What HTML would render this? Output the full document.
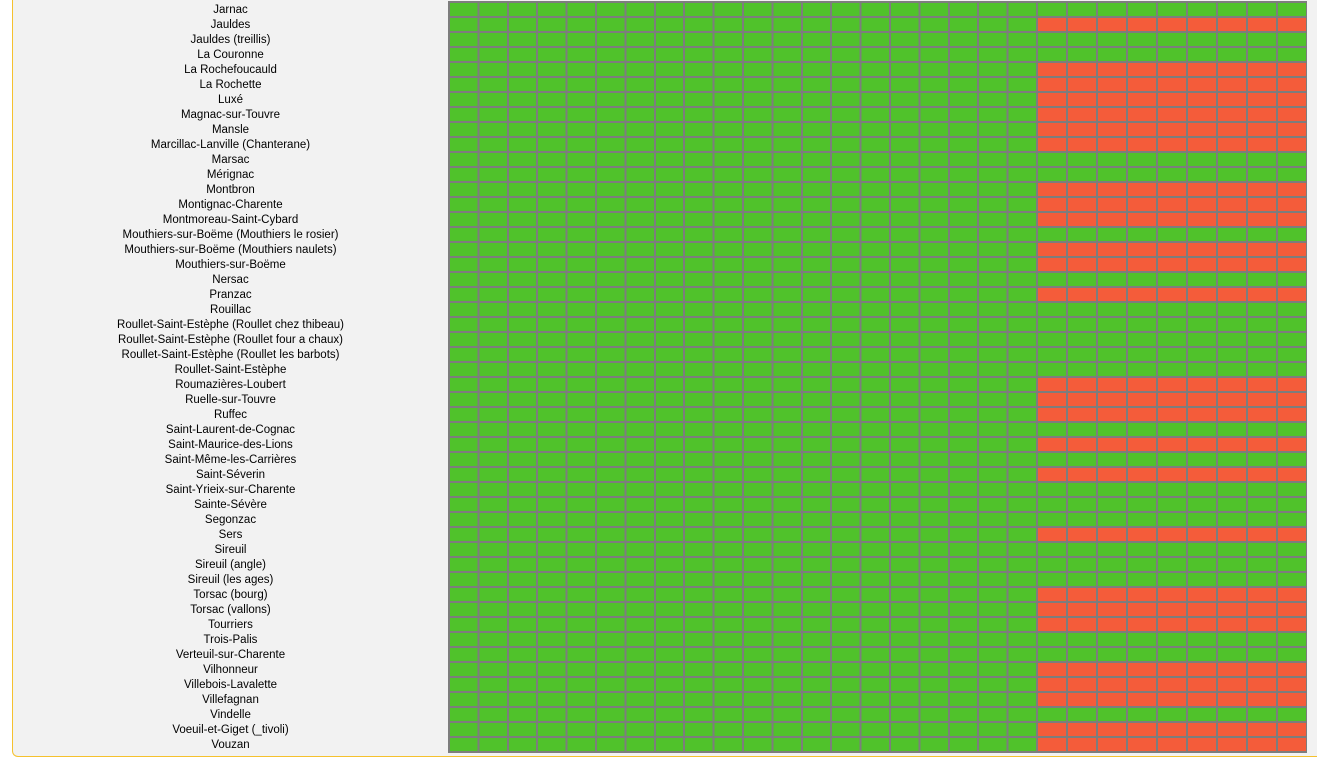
<!DOCTYPE html>
<html><head><meta charset="utf-8"><style>
html,body{margin:0;padding:0;background:#fff;width:1317px;height:763px;overflow:hidden}
#p{position:absolute;left:12px;top:-10px;width:1340px;height:766px;background:#f2f2f2;border-left:1.5px solid #f5c12e;border-bottom:1.5px solid #f5c12e;border-radius:0 0 0 6px}
#gbg{position:absolute;left:448px;top:1px;width:859px;height:752px;background:#7d7d7d}
.row{position:absolute;left:0;height:15px;width:1317px}
.l{position:absolute;left:13px;width:435px;text-align:center;font:11.5px/15px "Liberation Sans",sans-serif;color:#000;top:2px}
.a{position:absolute;left:448px;width:588px;top:2px;height:13px;background:repeating-linear-gradient(90deg,#7d7d7d 0 2px,#50c22b 2px 29.4px)}
.b{position:absolute;left:1036px;width:270px;top:2px;height:13px;background:repeating-linear-gradient(90deg,#7d7d7d 0 2px,#50c22b 2px 30px)}
.r .b{background:repeating-linear-gradient(90deg,#7d7d7d 0 2px,#f45c3a 2px 30px)}
</style></head><body>
<div id="p"></div>
<div id="gbg"></div>
<div class="row" style="top:1px"><div class="l">Jarnac</div><div class="a"></div><div class="b"></div></div>
<div class="row r" style="top:16px"><div class="l">Jauldes</div><div class="a"></div><div class="b"></div></div>
<div class="row" style="top:31px"><div class="l">Jauldes (treillis)</div><div class="a"></div><div class="b"></div></div>
<div class="row" style="top:46px"><div class="l">La Couronne</div><div class="a"></div><div class="b"></div></div>
<div class="row r" style="top:61px"><div class="l">La Rochefoucauld</div><div class="a"></div><div class="b"></div></div>
<div class="row r" style="top:76px"><div class="l">La Rochette</div><div class="a"></div><div class="b"></div></div>
<div class="row r" style="top:91px"><div class="l">Luxé</div><div class="a"></div><div class="b"></div></div>
<div class="row r" style="top:106px"><div class="l">Magnac-sur-Touvre</div><div class="a"></div><div class="b"></div></div>
<div class="row r" style="top:121px"><div class="l">Mansle</div><div class="a"></div><div class="b"></div></div>
<div class="row r" style="top:136px"><div class="l">Marcillac-Lanville (Chanterane)</div><div class="a"></div><div class="b"></div></div>
<div class="row" style="top:151px"><div class="l">Marsac</div><div class="a"></div><div class="b"></div></div>
<div class="row" style="top:166px"><div class="l">Mérignac</div><div class="a"></div><div class="b"></div></div>
<div class="row r" style="top:181px"><div class="l">Montbron</div><div class="a"></div><div class="b"></div></div>
<div class="row r" style="top:196px"><div class="l">Montignac-Charente</div><div class="a"></div><div class="b"></div></div>
<div class="row r" style="top:211px"><div class="l">Montmoreau-Saint-Cybard</div><div class="a"></div><div class="b"></div></div>
<div class="row" style="top:226px"><div class="l">Mouthiers-sur-Boëme (Mouthiers le rosier)</div><div class="a"></div><div class="b"></div></div>
<div class="row r" style="top:241px"><div class="l">Mouthiers-sur-Boëme (Mouthiers naulets)</div><div class="a"></div><div class="b"></div></div>
<div class="row r" style="top:256px"><div class="l">Mouthiers-sur-Boëme</div><div class="a"></div><div class="b"></div></div>
<div class="row" style="top:271px"><div class="l">Nersac</div><div class="a"></div><div class="b"></div></div>
<div class="row r" style="top:286px"><div class="l">Pranzac</div><div class="a"></div><div class="b"></div></div>
<div class="row" style="top:301px"><div class="l">Rouillac</div><div class="a"></div><div class="b"></div></div>
<div class="row" style="top:316px"><div class="l">Roullet-Saint-Estèphe (Roullet chez thibeau)</div><div class="a"></div><div class="b"></div></div>
<div class="row" style="top:331px"><div class="l">Roullet-Saint-Estèphe (Roullet four a chaux)</div><div class="a"></div><div class="b"></div></div>
<div class="row" style="top:346px"><div class="l">Roullet-Saint-Estèphe (Roullet les barbots)</div><div class="a"></div><div class="b"></div></div>
<div class="row" style="top:361px"><div class="l">Roullet-Saint-Estèphe</div><div class="a"></div><div class="b"></div></div>
<div class="row r" style="top:376px"><div class="l">Roumazières-Loubert</div><div class="a"></div><div class="b"></div></div>
<div class="row r" style="top:391px"><div class="l">Ruelle-sur-Touvre</div><div class="a"></div><div class="b"></div></div>
<div class="row r" style="top:406px"><div class="l">Ruffec</div><div class="a"></div><div class="b"></div></div>
<div class="row" style="top:421px"><div class="l">Saint-Laurent-de-Cognac</div><div class="a"></div><div class="b"></div></div>
<div class="row r" style="top:436px"><div class="l">Saint-Maurice-des-Lions</div><div class="a"></div><div class="b"></div></div>
<div class="row" style="top:451px"><div class="l">Saint-Même-les-Carrières</div><div class="a"></div><div class="b"></div></div>
<div class="row r" style="top:466px"><div class="l">Saint-Séverin</div><div class="a"></div><div class="b"></div></div>
<div class="row" style="top:481px"><div class="l">Saint-Yrieix-sur-Charente</div><div class="a"></div><div class="b"></div></div>
<div class="row" style="top:496px"><div class="l">Sainte-Sévère</div><div class="a"></div><div class="b"></div></div>
<div class="row" style="top:511px"><div class="l">Segonzac</div><div class="a"></div><div class="b"></div></div>
<div class="row r" style="top:526px"><div class="l">Sers</div><div class="a"></div><div class="b"></div></div>
<div class="row" style="top:541px"><div class="l">Sireuil</div><div class="a"></div><div class="b"></div></div>
<div class="row" style="top:556px"><div class="l">Sireuil (angle)</div><div class="a"></div><div class="b"></div></div>
<div class="row" style="top:571px"><div class="l">Sireuil (les ages)</div><div class="a"></div><div class="b"></div></div>
<div class="row r" style="top:586px"><div class="l">Torsac (bourg)</div><div class="a"></div><div class="b"></div></div>
<div class="row r" style="top:601px"><div class="l">Torsac (vallons)</div><div class="a"></div><div class="b"></div></div>
<div class="row r" style="top:616px"><div class="l">Tourriers</div><div class="a"></div><div class="b"></div></div>
<div class="row" style="top:631px"><div class="l">Trois-Palis</div><div class="a"></div><div class="b"></div></div>
<div class="row" style="top:646px"><div class="l">Verteuil-sur-Charente</div><div class="a"></div><div class="b"></div></div>
<div class="row r" style="top:661px"><div class="l">Vilhonneur</div><div class="a"></div><div class="b"></div></div>
<div class="row r" style="top:676px"><div class="l">Villebois-Lavalette</div><div class="a"></div><div class="b"></div></div>
<div class="row r" style="top:691px"><div class="l">Villefagnan</div><div class="a"></div><div class="b"></div></div>
<div class="row" style="top:706px"><div class="l">Vindelle</div><div class="a"></div><div class="b"></div></div>
<div class="row r" style="top:721px"><div class="l">Voeuil-et-Giget (_tivoli)</div><div class="a"></div><div class="b"></div></div>
<div class="row r" style="top:736px"><div class="l">Vouzan</div><div class="a"></div><div class="b"></div></div>
</body></html>
